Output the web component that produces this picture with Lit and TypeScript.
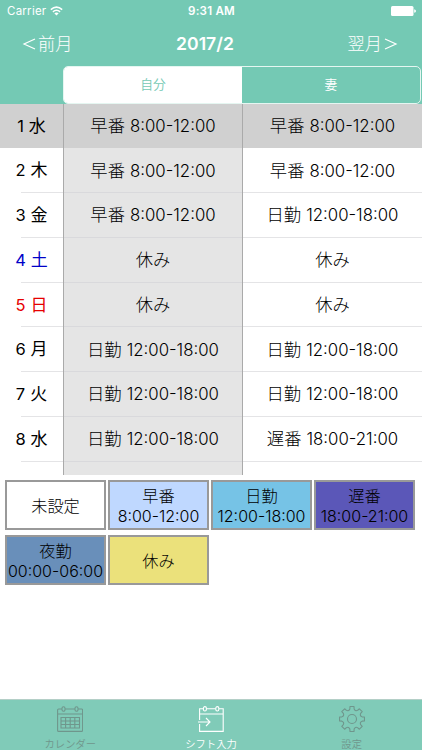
import { LitElement, html, css, svg } from "lit";
import { customElement, property } from "lit/decorators.js";

type Row = { day: string; week: string; kind?: string; mine: [string, string]; wife: [string, string] };

const HAYA: [string, string] = ["早番", "8:00-12:00"];
const NIK: [string, string] = ["日勤", "12:00-18:00"];
const OSO: [string, string] = ["遅番", "18:00-21:00"];
const OFF: [string, string] = ["休み", ""];

const ROWS: Row[] = [
  { day: "1", week: "水", kind: "today", mine: HAYA, wife: HAYA },
  { day: "2", week: "木", mine: HAYA, wife: HAYA },
  { day: "3", week: "金", mine: HAYA, wife: NIK },
  { day: "4", week: "土", kind: "sat", mine: OFF, wife: OFF },
  { day: "5", week: "日", kind: "sun", mine: OFF, wife: OFF },
  { day: "6", week: "月", mine: NIK, wife: NIK },
  { day: "7", week: "火", mine: NIK, wife: NIK },
  { day: "8", week: "水", mine: NIK, wife: OSO },
  { day: "", week: "", mine: ["", ""], wife: ["", ""] },
];

const SHIFTS = [
  { name: "未設定", time: "", tone: "none" },
  { name: "早番", time: "8:00-12:00", tone: "early" },
  { name: "日勤", time: "12:00-18:00", tone: "day" },
  { name: "遅番", time: "18:00-21:00", tone: "late" },
  { name: "夜勤", time: "00:00-06:00", tone: "night" },
  { name: "休み", time: "", tone: "off" },
];

const gearPath = (() => {
  const at = (r: number, a: number) => `${(13 + r * Math.cos(a)).toFixed(2)} ${(13 + r * Math.sin(a)).toFixed(2)}`;
  let d = "";
  for (let i = 0; i < 8; i++) {
    const a = (i * Math.PI) / 4 - Math.PI / 2;
    d += `${i ? "L" : "M"}${at(10.3, a - 0.21)}L${at(12.6, a - 0.16)}L${at(12.6, a + 0.16)}L${at(10.3, a + 0.21)}`;
    d += `Q${at(8.2, a + Math.PI / 8)} ${at(10.3, a + Math.PI / 4 - 0.21)}`;
  }
  return d + "Z";
})();

const calendarIcon = svg`
  <path d="M4.9 3H1.6Q.6 3 .6 4V24.4Q.6 25.4 1.6 25.4H24.6Q25.6 25.4 25.6 24.4V4Q25.6 3 24.6 3H21.1M8.1 3H17.9M.6 8H25.6"/>
  <rect x="5" y=".8" width="3" height="4.4" rx="1.5"/><rect x="18" y=".8" width="3" height="4.4" rx="1.5"/>
  <path d="M4 11.5H22.5V22H4ZM4 15H22.5M4 18.5H22.5M8.6 11.5V22M13.2 11.5V22M17.8 11.5V22"/>`;
const inputIcon = svg`
  <path d="M1.6 14V2.8H5.3M8.5 2.8H17.7M20.9 2.8H25.2V25.4H1.6V18M1.6 8H25.2"/>
  <rect x="5.4" y=".6" width="3" height="4.4" rx="1.5"/><rect x="17.8" y=".6" width="3" height="4.4" rx="1.5"/>
  <path d="M0 16H12M8 12L12 16L8 20"/>`;
const gearIcon = svg`<path d="${gearPath}" stroke-linejoin="round"/><circle cx="13" cy="13" r="4.5"/>`;

@customElement("shift-cell")
class ShiftCell extends LitElement {
  @property() name = "";
  @property() time = "";
  static styles = css`
    :host { display: flex; align-items: center; justify-content: center; gap: 5px; white-space: nowrap; }
    .name { font-size: 17.3px; }
    .time { font-size: 16.8px; }
  `;
  render() {
    return html`<span class="name">${this.name}</span>${this.time ? html`<span class="time">${this.time}</span>` : ""}`;
  }
}

@customElement("app-root")
class AppRoot extends LitElement {
  static styles = css`
    :host {
      display: flex; flex-direction: column; width: 422px; height: 750px; overflow: hidden;
      background: #fff; color: #000; font-family: Inter, "Noto Sans CJK JP", sans-serif; font-weight: 300;
    }
    * { box-sizing: border-box; }
    svg { display: block; }
    .header { height: 103.5px; flex: none; background: #74c9b4; color: #fff; display: flex; flex-direction: column; }
    .status { height: 22px; flex: none; display: grid; grid-template-columns: 1fr auto 1fr; align-items: center; padding: 0 6px 0 7px; font-size: 11.5px; font-weight: 400; line-height: 22px; }
    .carrier { display: flex; align-items: center; gap: 4px; letter-spacing: .25px; }
    .clock { font-weight: 600; font-size: 11.6px; letter-spacing: .2px; }
    .battery { justify-self: end; }
    .nav { height: 43.5px; flex: none; display: grid; grid-template-columns: 1fr auto 1fr; align-items: center; padding: 0 24px 0 22px; font-size: 17.2px; line-height: 43px; }
    .step { display: flex; align-items: center; gap: 2px; }
    .next { justify-self: end; }
    .title { font-weight: 600; font-size: 17.6px; margin: 0 10px 0 0; }
    .segments { margin: 0 1px 0 63px; height: 38px; flex: none; border: 1px solid #e5f6f1; border-radius: 5px; display: grid; grid-template-columns: 178px 1fr; background: #74c9b4; overflow: hidden; }
    .segment { text-align: center; font-size: 12.8px; line-height: 36px; font-weight: 350; }
    .chosen { background: #fff; color: #74c9b4; }
    .table { height: 371.5px; flex: none; overflow: hidden; }
    .row { height: 44.75px; display: grid; grid-template-columns: 63px 180px 1fr; }
    .row > * { line-height: 44px; }
    .date { display: flex; justify-content: center; gap: 5px; font-size: 17px; font-weight: 400; background: linear-gradient(#e4e4e6, #e4e4e6) 21px 100% / 100% 1px no-repeat; }
    .num { font-size: 16.5px; }
    .mine { background: #e5e5e5; border: solid #aaa; border-width: 0 1px; box-shadow: inset 0 -1px #d9d9dc; }
    .wife { box-shadow: inset 0 -1px #e4e4e6; }
    .today .date, .today .mine, .today .wife { background: #d0d0d0; box-shadow: none; }
    .sat .date { color: #0000c8; }
    .sun .date { color: #e60000; }
    .palette { display: grid; grid-template-columns: repeat(4, 101px); grid-auto-rows: 50px; gap: 5px 2px; padding: 5px 5px 0; flex: 1; align-content: start; }
    .shift { border: 2px solid #999; display: flex; flex-direction: column; align-items: center; justify-content: center; font-size: 16.2px; line-height: 20px; white-space: nowrap; padding-top: 1px; }
    .hours { font-size: 16px; }
    .early { background: #bfd8ff; }
    .day { background: #76c3e6; }
    .late { background: #5b57b8; }
    .night { background: #698fba; }
    .off { background: #ebe17b; }
    .tabs { height: 51px; flex: none; background: #80cbb8; border-top: 1px solid #b4cfc7; display: grid; grid-template-columns: repeat(3, 1fr); }
    .tab { display: flex; flex-direction: column; align-items: center; padding-top: 6px; color: #6f968c; font-size: 10.3px; line-height: 16px; font-weight: 350; gap: 3.5px; }
    .active { color: #fff; }
    .glyph { fill: none; stroke: currentColor; stroke-width: 1.1; }
  `;

  tab(label: string, icon: unknown, active = false) {
    return html`<div class="tab ${active ? "active" : ""}">
      <svg class="glyph" width="26" height="26" viewBox="0 0 26 26">${icon}</svg><span>${label}</span>
    </div>`;
  }

  render() {
    return html`
      <div class="header">
        <div class="status">
          <span class="carrier">Carrier
            <svg width="13" height="10" viewBox="0 0 13 10" fill="none" stroke="#fff" stroke-width="1.5">
              <path d="M.8 3.6Q6.5-1.4 12.2 3.6M2.9 5.8Q6.5 2.8 10.1 5.8"/><path d="M6.5 9.4L4.3 7.2Q6.5 5.6 8.7 7.2Z" fill="#fff" stroke="none"/>
            </svg>
          </span>
          <span class="clock">9:31 AM</span>
          <svg class="battery" width="25" height="10" viewBox="0 0 25 10" fill="#fff"><rect width="22.5" height="10" rx="1.5"/><path d="M23.2 3.2Q25 3.6 25 5T23.2 6.8Z"/></svg>
        </div>
        <div class="nav">
          <span class="step"><svg width="14" height="12" viewBox="0 0 14 12" fill="none" stroke="#fff" stroke-width="1.2"><path d="M13 1L2 6L13 11"/></svg>前月</span>
          <span class="title">2017/2</span>
          <span class="step next">翌月<svg width="14" height="12" viewBox="0 0 14 12" fill="none" stroke="#fff" stroke-width="1.2"><path d="M1 1L12 6L1 11"/></svg></span>
        </div>
        <div class="segments"><span class="segment chosen">自分</span><span class="segment">妻</span></div>
      </div>
      <div class="table">
        ${ROWS.map((r) => html`<div class="row ${r.kind ?? ""}">
          <div class="date"><span class="num">${r.day}</span><span>${r.week}</span></div>
          <shift-cell class="mine" .name=${r.mine[0]} .time=${r.mine[1]}></shift-cell>
          <shift-cell class="wife" .name=${r.wife[0]} .time=${r.wife[1]}></shift-cell>
        </div>`)}
      </div>
      <div class="palette">
        ${SHIFTS.map((s) => html`<div class="shift ${s.tone}"><span>${s.name}</span>${s.time ? html`<span class="hours">${s.time}</span>` : ""}</div>`)}
      </div>
      <div class="tabs">
        ${this.tab("カレンダー", calendarIcon)}${this.tab("シフト入力", inputIcon, true)}${this.tab("設定", gearIcon)}
      </div>`;
  }
}
